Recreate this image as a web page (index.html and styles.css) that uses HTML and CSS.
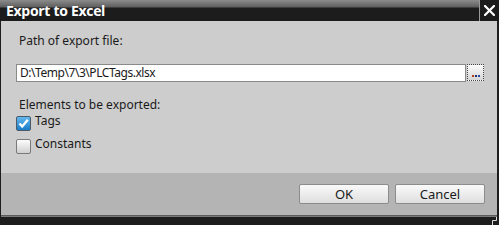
FILE: index.html
```html
<!DOCTYPE html>
<html>
<head>
<meta charset="utf-8">
<link rel="stylesheet" href="styles.css">
</head>
<body>
<div class="window">
  <div class="titlebar">
    <div class="title">Export to Excel</div>
    <div class="close">
      <svg width="11" height="11" viewBox="0 0 11 11"><path d="M1 1L10 10M10 1L1 10" stroke="#fff" stroke-width="2.2" stroke-linecap="square"/></svg>
    </div>
  </div>
  <div class="content">
    <div class="label path-label">Path of export file:</div>
    <div class="path-row">
      <div class="input">D:\Temp\7\3\PLCTags.xlsx</div>
      <div class="browse"><span class="dot d1"></span><span class="dot d2"></span><span class="dot d3"></span></div>
    </div>
    <div class="label elements-label">Elements to be exported:</div>
    <div class="check-row first">
      <span class="box checked">
        <svg width="13" height="13" viewBox="0 0 13 13"><path d="M2.5 6.5L5.2 9.5L10.8 2.8" fill="none" stroke="#fff" stroke-width="2.4"/></svg>
      </span>
      <span class="check-text">Tags</span>
    </div>
    <div class="check-row">
      <span class="box"></span>
      <span class="check-text">Constants</span>
    </div>
  </div>
  <div class="footer">
    <div class="btn">OK</div>
    <div class="btn">Cancel</div>
  </div>
  <div class="bottom">
    <svg class="grip" width="9" height="8" viewBox="0 0 9 8"><path d="M6.5 0V3.5H2.5V8" fill="none" stroke="#e0e0e0" stroke-width="1"/></svg>
  </div>
</div>
</body>
</html>
```
FILE: styles.css
```css
html, body {
  margin: 0;
  padding: 0;
}
body {
  width: 499px;
  height: 225px;
  overflow: hidden;
  font-family: "Noto Sans", "Open Sans", sans-serif;
  font-size: 12px;
  color: #1a1a1a;
}
.window {
  width: 499px;
  height: 225px;
  background: #1d1d1d;
  display: flex;
  flex-direction: column;
}
.titlebar {
  height: 21px;
  display: flex;
  background: linear-gradient(to bottom, #8c8c8c 0px, #5e5e5e 7px, #1c1c1c 8px, #1c1c1c 21px);
}
.title {
  flex: 1;
  color: #fff;
  font-weight: bold;
  font-size: 14px;
  letter-spacing: -0.3px;
  line-height: 22px;
  padding-left: 6px;
  font-family: "Open Sans", "Noto Sans", sans-serif;
}
.close {
  width: 20px;
  border-left: 1px solid #9a9a9a;
  background: #1c1c1c;
  display: flex;
  justify-content: center;
  padding-top: 5px;
  box-sizing: border-box;
}
.content {
  height: 152px;
  margin: 0 2px 0 1px;
  background: #cdcdcd;
  box-sizing: border-box;
  padding: 12px 0 0 15px;
  display: flex;
  flex-direction: column;
}
.label {
  line-height: 16px;
  padding-left: 3px;
}
.path-row {
  display: flex;
  margin-top: 15px;
  height: 18px;
}
.input {
  width: 450px;
  height: 18px;
  box-sizing: border-box;
  border: 1px solid #8a8a8a;
  background: #fff;
  line-height: 16px;
  padding-left: 3px;
  letter-spacing: -0.45px;
}
.browse {
  width: 17px;
  height: 17px;
  margin-left: 1px;
  box-sizing: border-box;
  border: 1px dotted #444;
  background: linear-gradient(to bottom, #fbfbfb, #d6d6d6);
  display: flex;
  align-items: flex-end;
  justify-content: center;
  gap: 1px;
  padding-bottom: 3px;
}
.dot {
  width: 2px;
  height: 2px;
}
.d1 { background: #b0401c; }
.d2 { background: #1c2c74; }
.d3 { background: #2848a8; }
.elements-label {
  margin-top: 15px;
}
.check-row {
  display: flex;
  align-items: flex-start;
  height: 15px;
  margin-top: 8px;
}
.check-row.first {
  margin-top: 3px;
}
.box {
  width: 15px;
  height: 15px;
  box-sizing: border-box;
  border: 1px solid #7a7a7a;
  border-radius: 2px;
  background: linear-gradient(to bottom, #fdfdfd, #cfcfcf);
  display: flex;
  align-items: center;
  justify-content: center;
}
.box.checked {
  border-color: #4a5a6a;
  background: linear-gradient(to bottom, #62b8ee, #1a7cc8);
}
.check-text {
  margin-left: 4px;
  line-height: 16px;
  margin-top: -3px;
}
.footer {
  height: 43px;
  margin: 0 2px 0 1px;
  background: #b4b4b4;
  border-bottom: 1px solid #5c5c5c;
  box-shadow: 0 1px 0 #7a7a7a;
  box-sizing: border-box;
  display: flex;
  justify-content: flex-end;
  align-items: flex-start;
  padding: 11px 12px 0 0;
  gap: 6px;
}
.btn {
  width: 90px;
  height: 20px;
  box-sizing: border-box;
  border: 1px solid #8c8c8c;
  border-radius: 2px;
  background: linear-gradient(to bottom, #fafafa, #dedede);
  text-align: center;
  line-height: 18px;
  font-size: 13px;
}
.bottom {
  flex: 1;
  position: relative;
}
.grip {
  position: absolute;
  right: 0;
  bottom: 0;
}
```
